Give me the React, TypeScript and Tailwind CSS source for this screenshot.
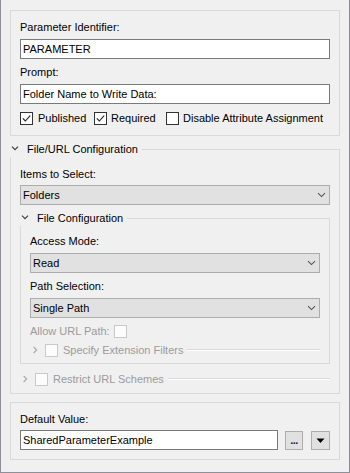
const groupBorder = "border-[#d9d9d9]";

function Check({ checked = false, disabled = false }: { checked?: boolean; disabled?: boolean }) {
  return (
    <div
      className={`w-[13px] h-[13px] shrink-0 border flex items-center justify-center ${
        disabled ? "border-[#c9c9c9] bg-[#fcfcfc]" : "border-[#333333] bg-white"
      }`}
    >
      {checked && (
        <svg width="11" height="11" viewBox="0 0 11 11">
          <path d="M1.8 5.4 L4.3 8 L9.2 2.6" fill="none" stroke="#222" strokeWidth="1.1" />
        </svg>
      )}
    </div>
  );
}

function Label({ children }: { children: React.ReactNode }) {
  return <div className="h-[16px] leading-[16px] whitespace-nowrap">{children}</div>;
}

function TextInput({ value, className = "" }: { value: string; className?: string }) {
  return (
    <div className={`h-[20px] border border-[#7a7a7a] bg-white pl-[2px] leading-[18px] whitespace-nowrap ${className}`}>
      {value}
    </div>
  );
}

function Select({ value, className = "" }: { value: string; className?: string }) {
  return (
    <div
      className={`h-[20px] border border-[#adadad] bg-[#e1e1e1] pl-[2px] pr-[3px] flex items-center justify-between leading-[18px] ${className}`}
    >
      <span>{value}</span>
      <svg width="9" height="6" viewBox="0 0 9 6">
        <path d="M1 1.2 L4.5 4.6 L8 1.2" fill="none" stroke="#555" strokeWidth="1.1" />
      </svg>
    </div>
  );
}

// expanded group title: chevron, text, line running into the right border
function GroupHeader({ title, className = "" }: { title: string; className?: string }) {
  return (
    <div className={`flex h-[16px] items-center ${className}`}>
      <svg width="10" height="16" viewBox="0 0 10 16" className="shrink-0">
        <path d="M2 5.6 L5 8.6 L8 5.6" fill="none" stroke="#404040" strokeWidth="1.2" />
      </svg>
      <span className="ml-[7px] leading-[16px] whitespace-nowrap">{title}</span>
      <div className={`ml-[4px] flex-1 h-[8px] self-end border-t border-r ${groupBorder}`} />
    </div>
  );
}

// collapsed, disabled group row
function CollapsedRow({ title, className = "" }: { title: string; className?: string }) {
  return (
    <div className={`flex h-[16px] items-center text-[#9b9b9b] ${className}`}>
      <svg width="10" height="16" viewBox="0 0 10 16" className="shrink-0">
        <path d="M3.6 4.8 L6.6 8 L3.6 11.2" fill="none" stroke="#a8a8a8" strokeWidth="1.2" />
      </svg>
      <div className="ml-[5px]">
        <Check disabled />
      </div>
      <span className="ml-[5px] leading-[16px] whitespace-nowrap">{title}</span>
      <div className="ml-[4px] flex-1 h-[2px] border-t border-[#d9d9d9] bg-white" />
    </div>
  );
}

export default function App() {
  return (
    <div className="w-[350px] h-[473px] bg-[#f0f0f0] border-x border-b border-[#8f8f99] px-[9px] pt-[10px] font-['Liberation_Sans',Arial,sans-serif] text-[11px] text-black">
      {/* parameter */}
      <div className={`border ${groupBorder} px-[9px] pt-[8px] pb-[9px]`}>
        <Label>Parameter Identifier:</Label>
        <TextInput value="PARAMETER" className="mt-[4px]" />
        <div className="mt-[5px]">
          <Label>Prompt:</Label>
        </div>
        <TextInput value="Folder Name to Write Data:" className="mt-[4px]" />
        <div className="mt-[6px] flex h-[16px] items-center">
          <div className="w-[74px] flex items-center gap-[5px]">
            <Check checked />
            <span>Published</span>
          </div>
          <div className="w-[72px] flex items-center gap-[4px]">
            <Check checked />
            <span>Required</span>
          </div>
          <div className="flex items-center gap-[4px] whitespace-nowrap">
            <Check />
            <span>Disable Attribute Assignment</span>
          </div>
        </div>
      </div>

      {/* file/url configuration */}
      <GroupHeader title="File/URL Configuration" className="mt-[5px]" />
      <div className={`border-x border-b ${groupBorder} px-[9px] pt-[9px] pb-[6px]`}>
        <Label>Items to Select:</Label>
        <Select value="Folders" className="mt-[3px]" />

        <GroupHeader title="File Configuration" className="mt-[5px]" />
        <div className={`border-x border-b ${groupBorder} px-[9px] pt-[7px] pb-[5px]`}>
          <Label>Access Mode:</Label>
          <Select value="Read" className="mt-[4px]" />
          <div className="mt-[5px]">
            <Label>Path Selection:</Label>
          </div>
          <Select value="Single Path" className="mt-[4px]" />
          <div className="mt-[5px] flex h-[16px] items-center gap-[4px] text-[#9b9b9b]">
            <span className="leading-[16px]">Allow URL Path:</span>
            <Check disabled />
          </div>
          <CollapsedRow title="Specify Extension Filters" className="mt-[3px]" />
        </div>

        <CollapsedRow title="Restrict URL Schemes" className="mt-[7px]" />
      </div>

      {/* default value */}
      <div className={`mt-[8px] border ${groupBorder} px-[9px] pt-[8px] pb-[9px]`}>
        <Label>Default Value:</Label>
        <div className="mt-[3px] flex items-end">
          <TextInput value="SharedParameterExample" className="w-[258px]" />
          <button className="ml-[7px] w-[18px] h-[19px] border border-[#adadad] bg-[#e1e1e1] flex items-center justify-center leading-none">
            <span className="text-[11px] font-bold tracking-[-0.5px] text-[#1a1a40]">...</span>
          </button>
          <button className="ml-[8px] w-[19px] h-[19px] border border-[#adadad] bg-[#e1e1e1] flex items-center justify-center">
            <svg width="9" height="6" viewBox="0 0 9 6">
              <polygon points="0.5,0.5 8.5,0.5 4.5,5" fill="#000" />
            </svg>
          </button>
        </div>
      </div>
    </div>
  );
}
